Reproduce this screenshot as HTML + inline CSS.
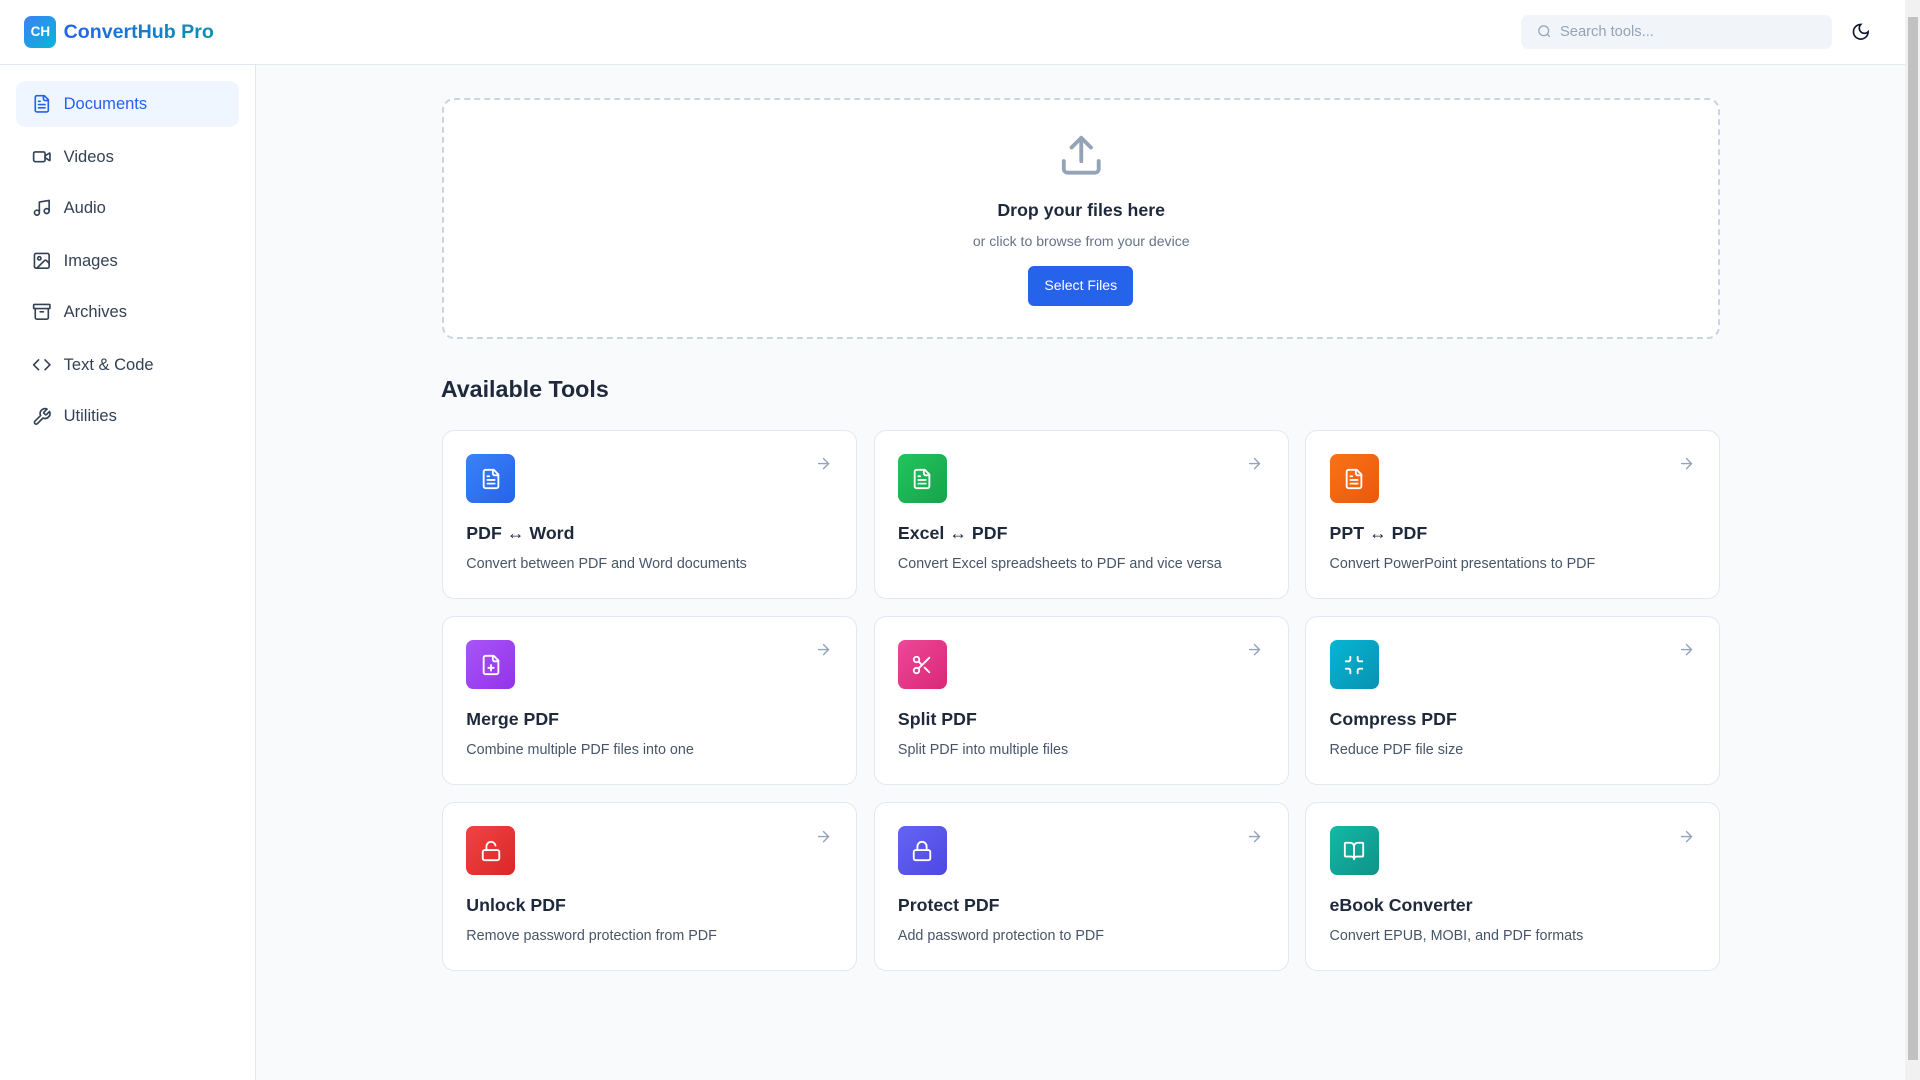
<!DOCTYPE html>
<html><head><meta charset="utf-8">
<style>
*{box-sizing:border-box;margin:0;padding:0}
html,body{width:1920px;height:1080px;overflow:hidden}
body{font-family:"Liberation Sans",sans-serif;background:#f8fafc;}
#root{zoom:1.22449;width:1568px;height:882px;position:relative;background:#f8fafc;overflow:hidden}
.header{position:absolute;left:0;top:0;width:1556px;height:53px;background:#fff;border-bottom:1px solid #e2e8f0}
.logo{position:absolute;left:20px;top:13px;width:26px;height:26px;border-radius:6px;background:linear-gradient(135deg,#3b82f6,#06b6d4);color:#fff;font-weight:700;font-size:11px;display:flex;align-items:center;justify-content:center}
.brand{position:absolute;left:52px;top:17px;font-size:16px;font-weight:700;background:linear-gradient(90deg,#2563eb,#0891b2);-webkit-background-clip:text;color:transparent}
.search{position:absolute;left:1242px;top:12px;width:254px;height:28px;background:#f1f5f9;border-radius:6px}
.search span{position:absolute;left:32px;top:8px;font-size:12px;color:#94a3b8}
.search svg{position:absolute;left:13px;top:8px}
.moon{position:absolute;left:1512px;top:18px}
.side{position:absolute;left:0;top:53px;width:209px;height:829px;background:#fff;border-right:1px solid #e2e8f0}
.nav{position:absolute;left:13px;width:182px;height:38px;border-radius:8px;display:flex;align-items:center;padding-left:13px;font-size:13.5px;color:#334155}
.nav svg{margin-right:10px}
.nav.act{background:#eff6ff;color:#2563eb;font-weight:500}
.drop{position:absolute;left:361px;top:80px;width:1044px;height:197px;background:#fff;border:2px dashed #cbd5e1;border-radius:10px;text-align:center}
.drop h3{position:absolute;top:82px;width:100%;font-size:14.5px;color:#1e293b}
.drop p{position:absolute;top:109px;width:100%;font-size:11.5px;color:#64748b}
.btn{position:absolute;left:477px;top:136px;width:86px;height:32px;background:#2563eb;border-radius:5px;color:#fff;font-size:11.5px;line-height:32px}
h2{position:absolute;left:360px;top:307px;font-size:19px;color:#1e293b}
.card{position:absolute;width:339px;height:138px;background:#fff;border:1px solid #e2e8f0;border-radius:10px}
.ic{position:absolute;left:19px;top:19px;width:40px;height:40px;border-radius:6px;display:flex;align-items:center;justify-content:center}
.card h4{position:absolute;left:19px;top:75px;font-size:14.5px;color:#1e293b}
.card p{position:absolute;left:19px;top:102px;font-size:11.7px;color:#475569}
.arr{position:absolute;right:20px;top:20px}
.sb{position:absolute;left:1556px;top:0;width:12px;height:882px;background:#f1f1f1}
.sb div{position:absolute;left:2px;top:14px;width:8px;height:852px;background:#c1c1c1}
</style></head><body><div id="root">
<div class="header">
<div class="logo">CH</div><div class="brand">ConvertHub Pro</div>
<div class="search"><svg width="12" height="12" viewBox="0 0 24 24" fill="none" stroke="#94a3b8" stroke-width="2"><circle cx="11" cy="11" r="8"/><path d="m21 21-4.3-4.3"/></svg><span>Search tools...</span></div>
<svg class="moon" width="16" height="16" viewBox="0 0 24 24" fill="none" stroke="#0f172a" stroke-width="2" stroke-linecap="round"><path d="M12 3a6 6 0 0 0 9 9 9 9 0 1 1-9-9Z"/></svg>
</div>
<div class="side">
<div class="nav act" style="top:13px"><svg width="16" height="16" viewBox="0 0 24 24" fill="none" stroke="currentColor" stroke-width="2" stroke-linecap="round" stroke-linejoin="round"><path d="M15 2H6a2 2 0 0 0-2 2v16a2 2 0 0 0 2 2h12a2 2 0 0 0 2-2V7Z"/><path d="M14 2v4a2 2 0 0 0 2 2h4M10 9H8M16 13H8M16 17H8"/></svg>Documents</div>
<div class="nav" style="top:56px"><svg width="16" height="16" viewBox="0 0 24 24" fill="none" stroke="currentColor" stroke-width="2" stroke-linecap="round" stroke-linejoin="round"><path d="m16 13 5.2 3.5a.5.5 0 0 0 .8-.4V7.9a.5.5 0 0 0-.8-.4L16 11"/><rect x="2" y="6" width="14" height="12" rx="2"/></svg>Videos</div>
<div class="nav" style="top:98px"><svg width="16" height="16" viewBox="0 0 24 24" fill="none" stroke="currentColor" stroke-width="2" stroke-linecap="round" stroke-linejoin="round"><path d="M9 18V5l12-2v13"/><circle cx="6" cy="18" r="3"/><circle cx="18" cy="16" r="3"/></svg>Audio</div>
<div class="nav" style="top:141px"><svg width="16" height="16" viewBox="0 0 24 24" fill="none" stroke="currentColor" stroke-width="2" stroke-linecap="round" stroke-linejoin="round"><rect x="3" y="3" width="18" height="18" rx="2"/><circle cx="9" cy="9" r="2"/><path d="m21 15-3-3a2 2 0 0 0-3 0L6 21"/></svg>Images</div>
<div class="nav" style="top:183px"><svg width="16" height="16" viewBox="0 0 24 24" fill="none" stroke="currentColor" stroke-width="2" stroke-linecap="round" stroke-linejoin="round"><rect x="2" y="3" width="20" height="5" rx="1"/><path d="M4 8v11a2 2 0 0 0 2 2h12a2 2 0 0 0 2-2V8M10 12h4"/></svg>Archives</div>
<div class="nav" style="top:226px"><svg width="16" height="16" viewBox="0 0 24 24" fill="none" stroke="currentColor" stroke-width="2" stroke-linecap="round" stroke-linejoin="round"><path d="m16 18 6-6-6-6M8 6l-6 6 6 6"/></svg>Text &amp; Code</div>
<div class="nav" style="top:268px"><svg width="16" height="16" viewBox="0 0 24 24" fill="none" stroke="currentColor" stroke-width="2" stroke-linecap="round" stroke-linejoin="round"><path d="M14.7 6.3a1 1 0 0 0 0 1.4l1.6 1.6a1 1 0 0 0 1.4 0l3.77-3.770a6 6 0 0 1-7.94 7.94l-6.91 6.91a2.12 2.12 0 0 1-3-3l6.91-6.91a6 6 0 0 1 7.94-7.94l-3.76 3.76z"/></svg>Utilities</div>
</div>
<div class="drop">
<svg style="position:absolute;left:501px;top:26px" width="38" height="38" viewBox="0 0 24 24" fill="none" stroke="#94a3b8" stroke-width="2" stroke-linecap="round" stroke-linejoin="round"><path d="M21 15v4a2 2 0 0 1-2 2H5a2 2 0 0 1-2-2v-4M17 8l-5-5-5 5M12 3v12"/></svg>
<h3>Drop your files here</h3><p>or click to browse from your device</p><div class="btn">Select Files</div>
</div>
<h2>Available Tools</h2>
<div id="cards"></div>
<div class="sb"><div></div></div>
</div>
<script>
var doc='<path d="M15 2H6a2 2 0 0 0-2 2v16a2 2 0 0 0 2 2h12a2 2 0 0 0 2-2V7Z"/><path d="M14 2v4a2 2 0 0 0 2 2h4M10 9H8M16 13H8M16 17H8"/>';
var I={doc:doc,
merge:'<path d="M15 2H6a2 2 0 0 0-2 2v16a2 2 0 0 0 2 2h12a2 2 0 0 0 2-2V7Z"/><path d="M14 2v4a2 2 0 0 0 2 2h4M9 15h6M12 18v-6"/>',
cut:'<circle cx="6" cy="6" r="3"/><path d="M8.12 8.12 12 12M20 4 8.12 15.88"/><circle cx="6" cy="18" r="3"/><path d="M14.8 14.8 20 20"/>',
comp:'<path d="M8 3v3a2 2 0 0 1-2 2H3M21 8h-3a2 2 0 0 1-2-2V3M3 16h3a2 2 0 0 1 2 2v3M16 21v-3a2 2 0 0 1 2-2h3"/>',
unlock:'<rect width="18" height="11" x="3" y="11" rx="2"/><path d="M7 11V7a5 5 0 0 1 9.9-1"/>',
lock:'<rect width="18" height="11" x="3" y="11" rx="2"/><path d="M7 11V7a5 5 0 0 1 10 0v4"/>',
book:'<path d="M12 7v14M3 18a1 1 0 0 1-1-1V4a1 1 0 0 1 1-1h5a4 4 0 0 1 4 4 4 4 0 0 1 4-4h5a1 1 0 0 1 1 1v13a1 1 0 0 1-1 1h-6a3 3 0 0 0-3 3 3 3 0 0 0-3-3z"/>'};
var C=[["PDF ↔ Word","Convert between PDF and Word documents","#3b82f6","#2563eb","doc"],
["Excel ↔ PDF","Convert Excel spreadsheets to PDF and vice versa","#22c55e","#16a34a","doc"],
["PPT ↔ PDF","Convert PowerPoint presentations to PDF","#f97316","#ea580c","doc"],
["Merge PDF","Combine multiple PDF files into one","#a855f7","#9333ea","merge"],
["Split PDF","Split PDF into multiple files","#ec4899","#db2777","cut"],
["Compress PDF","Reduce PDF file size","#06b6d4","#0891b2","comp"],
["Unlock PDF","Remove password protection from PDF","#ef4444","#dc2626","unlock"],
["Protect PDF","Add password protection to PDF","#6366f1","#4f46e5","lock"],
["eBook Converter","Convert EPUB, MOBI, and PDF formats","#14b8a6","#0d9488","book"]];
var h='';
C.forEach(function(c,i){var x=361+(i%3)*352.5,y=351+Math.floor(i/3)*152;
h+='<div class="card" style="left:'+x+'px;top:'+y+'px"><div class="ic" style="background:linear-gradient(135deg,'+c[2]+','+c[3]+')"><svg width="18" height="18" viewBox="0 0 24 24" fill="none" stroke="#fff" stroke-width="2" stroke-linecap="round" stroke-linejoin="round">'+I[c[4]]+'</svg></div><svg class="arr" width="14" height="14" viewBox="0 0 24 24" fill="none" stroke="#94a3b8" stroke-width="2" stroke-linecap="round" stroke-linejoin="round"><path d="M5 12h14M12 5l7 7-7 7"/></svg><h4>'+c[0]+'</h4><p>'+c[1]+'</p></div>';});
document.getElementById('cards').innerHTML=h;
</script>
</body></html>
